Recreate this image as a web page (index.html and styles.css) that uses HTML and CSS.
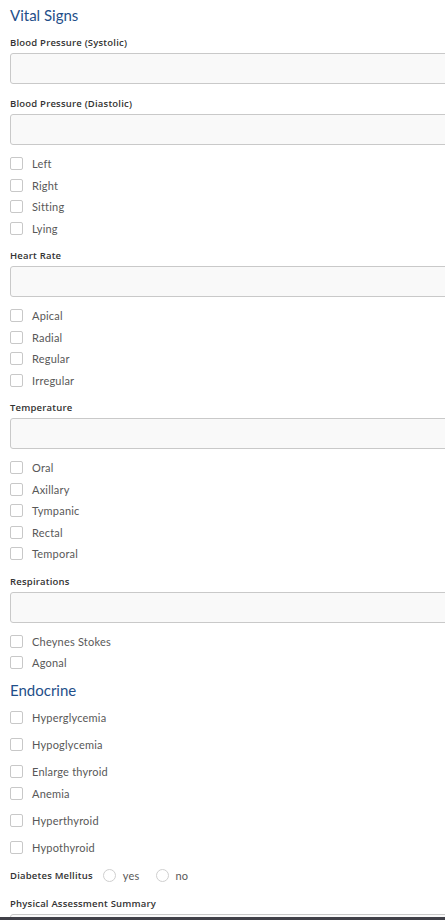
FILE: index.html
```html
<!DOCTYPE html>
<html lang="en">
<head>
<meta charset="utf-8">
<title>Vital Signs</title>
<link rel="stylesheet" href="styles.css">
</head>
<body>
<form class="form">
  <h2 class="section-title section-title--first">Vital Signs</h2>

  <div class="field">
    <label class="field-label">Blood Pressure (Systolic)</label>
    <input class="field-input" type="text">
  </div>
  <div class="field">
    <label class="field-label">Blood Pressure (Diastolic)</label>
    <input class="field-input" type="text">
  </div>
  <ul class="check-list">
    <li class="check-row"><span class="box"></span><span class="check-text">Left</span></li>
    <li class="check-row"><span class="box"></span><span class="check-text">Right</span></li>
    <li class="check-row"><span class="box"></span><span class="check-text">Sitting</span></li>
    <li class="check-row"><span class="box"></span><span class="check-text">Lying</span></li>
  </ul>

  <div class="field">
    <label class="field-label">Heart Rate</label>
    <input class="field-input" type="text">
  </div>
  <ul class="check-list">
    <li class="check-row"><span class="box"></span><span class="check-text">Apical</span></li>
    <li class="check-row"><span class="box"></span><span class="check-text">Radial</span></li>
    <li class="check-row"><span class="box"></span><span class="check-text">Regular</span></li>
    <li class="check-row"><span class="box"></span><span class="check-text">Irregular</span></li>
  </ul>

  <div class="field">
    <label class="field-label">Temperature</label>
    <input class="field-input" type="text">
  </div>
  <ul class="check-list">
    <li class="check-row"><span class="box"></span><span class="check-text">Oral</span></li>
    <li class="check-row"><span class="box"></span><span class="check-text">Axillary</span></li>
    <li class="check-row"><span class="box"></span><span class="check-text">Tympanic</span></li>
    <li class="check-row"><span class="box"></span><span class="check-text">Rectal</span></li>
    <li class="check-row"><span class="box"></span><span class="check-text">Temporal</span></li>
  </ul>

  <div class="field">
    <label class="field-label">Respirations</label>
    <input class="field-input" type="text">
  </div>
  <ul class="check-list">
    <li class="check-row"><span class="box"></span><span class="check-text">Cheynes Stokes</span></li>
    <li class="check-row"><span class="box"></span><span class="check-text">Agonal</span></li>
  </ul>

  <h2 class="section-title">Endocrine</h2>
  <ul class="check-list check-list--wide">
    <li class="check-row"><span class="box"></span><span class="check-text">Hyperglycemia</span></li>
    <li class="check-row"><span class="box"></span><span class="check-text">Hypoglycemia</span></li>
    <li class="check-row check-row--tight"><span class="box"></span><span class="check-text">Enlarge thyroid</span></li>
    <li class="check-row"><span class="box"></span><span class="check-text">Anemia</span></li>
    <li class="check-row"><span class="box"></span><span class="check-text">Hyperthyroid</span></li>
    <li class="check-row"><span class="box"></span><span class="check-text">Hypothyroid</span></li>
  </ul>

  <div class="radio-line">
    <span class="field-label">Diabetes Mellitus</span>
    <span class="radio"></span><span class="check-text">yes</span>
    <span class="radio"></span><span class="check-text">no</span>
  </div>

  <div class="field">
    <label class="field-label">Physical Assessment Summary</label>
    <input class="field-input" type="text">
  </div>
</form>
<div class="bottom-bar"></div>
</body>
</html>
```
FILE: styles.css
```css
html, body {
  margin: 0;
  padding: 0;
  background: #ffffff;
  overflow: hidden;
}

body {
  font-family: Lato, "Open Sans", Arial, sans-serif;
  color: #222;
}

.form {
  width: 470px;
  padding: 0 0 0 10px;
  margin: 0;
}

.section-title {
  margin: -3px 0 0;
  font-size: 15px;
  font-weight: 400;
  line-height: 20px;
  color: #1f4f8a;
}

.section-title--first {
  margin: 0 0 10px;
  padding-top: 5px;
}

.field {
  display: flex;
  flex-direction: column;
  margin-bottom: 12px;
}

.field-label {
  font-family: "Open Sans", Lato, Arial, sans-serif;
  font-size: 9.5px;
  line-height: 14px;
  font-weight: 600;
  color: #333;
  padding-top: 1px;
  margin-bottom: 3px;
  letter-spacing: 0.2px;
}

.field-input {
  box-sizing: border-box;
  height: 31px;
  width: 100%;
  margin: 0;
  border: 1px solid #c9c9c9;
  border-radius: 3px;
  background: #f9f9f9;
  font: inherit;
}

.check-list {
  list-style: none;
  margin: -4px 0 9px;
  padding: 0;
}

.check-row {
  display: flex;
  align-items: center;
  gap: 9px;
  height: 21.5px;
}

.check-list--wide {
  margin-top: 7px;
  margin-bottom: 9px;
}

.check-list--wide .check-row {
  height: 22px;
  margin-bottom: 5px;
}

.check-list--wide .check-row--tight {
  margin-bottom: 0;
}

.box {
  box-sizing: border-box;
  width: 13px;
  height: 13px;
  border: 1px solid #c8c8c8;
  border-radius: 2px;
  background: #fff;
  flex: none;
}

.check-text {
  font-size: 11px;
  color: #585858;
  letter-spacing: 0.2px;
}

.radio-line {
  display: flex;
  align-items: center;
  height: 16px;
  margin-bottom: 12px;
}

.radio-line .field-label {
  margin: 0 10px 0 0;
  padding-top: 0;
}

.radio {
  box-sizing: border-box;
  width: 13px;
  height: 13px;
  border: 1px solid #cfcfcf;
  border-radius: 50%;
  background: #fff;
  margin-right: 7px;
  flex: none;
}

.radio-line .check-text + .radio {
  margin-left: 16px;
}

.bottom-bar {
  position: fixed;
  left: 0;
  right: 0;
  bottom: 0;
  height: 3px;
  background: #404048;
}
```
